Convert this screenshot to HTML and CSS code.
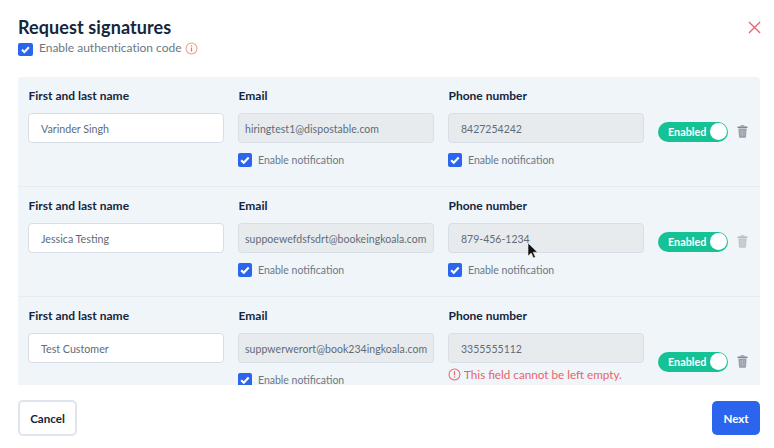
FILE: index.html
```html
<!DOCTYPE html>
<html lang="en">
<head>
<meta charset="utf-8">
<title>Request signatures</title>
<link rel="stylesheet" href="styles.css">
</head>
<body>
<div class="modal">
  <header class="head">
    <h1 class="title">Request signatures</h1>
    <svg class="close" viewBox="0 0 14 14" width="14" height="14"><path d="M1 1l12 12M13 1L1 13" fill="none" stroke="#e8636a" stroke-width="1.4"/></svg>
  </header>
  <div class="auth">
    <span class="check check-lg"><svg viewBox="0 0 16 16"><path d="M3.6 8.4l3 2.8 5.6-6" fill="none" stroke="#fff" stroke-width="2.6"/></svg></span>
    <span class="auth-text">Enable authentication code</span>
    <svg class="info" viewBox="0 0 14 14" width="13" height="13"><circle cx="7" cy="7" r="5.9" fill="none" stroke="#ee9a85" stroke-width="1.1"/><path d="M7 6v4.2M7 3.5v1.3" stroke="#e8745f" stroke-width="1.3" fill="none"/></svg>
  </div>

  <div class="panel">
    <section class="row">
      <div class="col">
        <div class="label">First and last name</div>
        <div class="input input-name">Varinder Singh</div>
      </div>
      <div class="col">
        <div class="label">Email</div>
        <div class="input input-off">hiringtest1@dispostable.com</div>
        <div class="notify"><span class="check"><svg viewBox="0 0 16 16"><path d="M3.6 8.4l3 2.8 5.6-6" fill="none" stroke="#fff" stroke-width="2.4"/></svg></span>Enable notification</div>
      </div>
      <div class="col">
        <div class="label">Phone number</div>
        <div class="input input-off">8427254242</div>
        <div class="notify"><span class="check"><svg viewBox="0 0 16 16"><path d="M3.6 8.4l3 2.8 5.6-6" fill="none" stroke="#fff" stroke-width="2.4"/></svg></span>Enable notification</div>
      </div>
      <div class="actions">
        <div class="toggle"><span class="toggle-text">Enabled</span><span class="knob"></span></div>
        <svg class="trash" viewBox="0 0 12 14"><path d="M4.2 1.6V.8h3.6v.8" fill="none" stroke="#7f8a96"/><rect x=".5" y="1.6" width="11" height="1.7" rx=".5" fill="#7f8a96"/><path d="M1.5 3.8h9l-.7 9.2a.8.8 0 0 1-.8.7H3a.8.8 0 0 1-.8-.7z" fill="#97a1ab"/><path d="M4.2 5.4v6.6M6 5.4v6.6M7.8 5.4v6.6" stroke="#c3cad1" stroke-width=".6"/></svg>
      </div>
    </section>

    <section class="row">
      <div class="col">
        <div class="label">First and last name</div>
        <div class="input input-name">Jessica Testing</div>
      </div>
      <div class="col">
        <div class="label">Email</div>
        <div class="input input-off">suppoewefdsfsdrt@bookeingkoala.com</div>
        <div class="notify"><span class="check"><svg viewBox="0 0 16 16"><path d="M3.6 8.4l3 2.8 5.6-6" fill="none" stroke="#fff" stroke-width="2.4"/></svg></span>Enable notification</div>
      </div>
      <div class="col">
        <div class="label">Phone number</div>
        <div class="input input-off cursor-host">879-456-1234
          <svg class="cursor" viewBox="0 0 12 18" width="12" height="18"><path d="M1 1v13l3.2-3 2.2 5 2-.9-2.2-4.900h4.300z" fill="#111" stroke="#eee" stroke-width=".6"/></svg>
        </div>
        <div class="notify"><span class="check"><svg viewBox="0 0 16 16"><path d="M3.6 8.4l3 2.8 5.6-6" fill="none" stroke="#fff" stroke-width="2.4"/></svg></span>Enable notification</div>
      </div>
      <div class="actions">
        <div class="toggle"><span class="toggle-text">Enabled</span><span class="knob"></span></div>
        <svg class="trash trash-off" viewBox="0 0 12 14"><path d="M4.2 1.6V.8h3.6v.8" fill="none" stroke="#7f8a96"/><rect x=".5" y="1.6" width="11" height="1.7" rx=".5" fill="#7f8a96"/><path d="M1.5 3.8h9l-.7 9.2a.8.8 0 0 1-.8.7H3a.8.8 0 0 1-.8-.7z" fill="#97a1ab"/><path d="M4.2 5.4v6.6M6 5.4v6.6M7.8 5.4v6.6" stroke="#c3cad1" stroke-width=".6"/></svg>
      </div>
    </section>

    <section class="row">
      <div class="col">
        <div class="label">First and last name</div>
        <div class="input input-name">Test Customer</div>
      </div>
      <div class="col">
        <div class="label">Email</div>
        <div class="input input-off">suppwerwerort@book234ingkoala.com</div>
        <div class="notify"><span class="check"><svg viewBox="0 0 16 16"><path d="M3.6 8.4l3 2.8 5.6-6" fill="none" stroke="#fff" stroke-width="2.4"/></svg></span>Enable notification</div>
      </div>
      <div class="col">
        <div class="label">Phone number</div>
        <div class="input input-off">3355555112</div>
        <div class="error"><svg viewBox="0 0 14 14" width="13" height="13"><circle cx="7" cy="7" r="5.9" fill="none" stroke="#e8636a" stroke-width="1.1"/><path d="M7 3.400v4.400M7 9.200v1.400" stroke="#e8636a" stroke-width="1.3" fill="none"/></svg>This field cannot be left empty.</div>
      </div>
      <div class="actions">
        <div class="toggle"><span class="toggle-text">Enabled</span><span class="knob"></span></div>
        <svg class="trash" viewBox="0 0 12 14"><path d="M4.2 1.6V.8h3.6v.8" fill="none" stroke="#7f8a96"/><rect x=".5" y="1.6" width="11" height="1.7" rx=".5" fill="#7f8a96"/><path d="M1.5 3.8h9l-.7 9.2a.8.8 0 0 1-.8.7H3a.8.8 0 0 1-.8-.7z" fill="#97a1ab"/><path d="M4.2 5.4v6.6M6 5.4v6.6M7.8 5.4v6.6" stroke="#c3cad1" stroke-width=".6"/></svg>
      </div>
    </section>
  </div>

  <footer class="foot">
    <button class="btn btn-cancel" type="button">Cancel</button>
    <button class="btn btn-next" type="button">Next</button>
  </footer>
</div>
</body>
</html>
```

FILE: styles.css
```css
* { box-sizing: border-box; }
html, body { margin: 0; padding: 0; }
body {
  width: 774px;
  height: 448px;
  overflow: hidden;
  background: #fff;
  font-family: Lato, "Liberation Sans", sans-serif;
  color: #14263d;
}
.modal { padding: 0 14px 0 18px; height: 448px; }
.head {
  display: flex;
  justify-content: space-between;
  align-items: center;
  height: 40px;
  padding-top: 14px;
}
.title { margin: 0; font-size: 18px; line-height: 26px; font-weight: 700; color: #14263d; letter-spacing: 0.1px; }
.close { margin-right: -1px; width: 13px; height: 13px; }
.auth {
  display: flex;
  align-items: center;
  height: 16px;
  gap: 6px;
  font-size: 12px;
  color: #6c7884;
}
.auth-text { line-height: 16px; letter-spacing: -0.02px; }
.info { margin-left: -3px; }
.check {
  width: 14px;
  height: 14px;
  flex: none;
  border-radius: 2px;
  background: #2c65ed;
  display: inline-flex;
}
.check-lg { width: 15px; height: 13px; margin-top: 2px; }
.check svg { width: 100%; height: 100%; display: block; }
.panel {
  margin-top: 21px;
  width: 742px;
  height: 308px;
  background: #f0f5f9;
  border-radius: 4px 4px 0 0;
  overflow: hidden;
}
.row {
  display: flex;
  align-items: center;
  padding-left: 10px;
  min-height: 110px;
  border-bottom: 1px solid #e6ebf0;
}
.row:last-child { border-bottom: 0; min-height: 129px; }
.col {
  width: 195.5px;
  margin-right: 14.5px;
  align-self: flex-start;
  padding-top: 11px;
}
.label { font-size: 12px; font-weight: 700; line-height: 16px; color: #14263d; padding-left: 0.5px; }
.input {
  margin-top: 9px;
  height: 30px;
  border: 1px solid #d7dee5;
  border-radius: 4px;
  font-size: 10.5px;
  line-height: 30px;
  white-space: nowrap;
  color: #5f6b77;
}
.input-name { background: #fff; padding-left: 12px; font-size: 10.7px; }
.input-off { background: #e8ebee; padding-left: 6px; letter-spacing: 0.05px; }
.col:nth-child(3) .input-off { padding-left: 12px; letter-spacing: 0; }
.cursor-host { position: relative; }
.cursor { position: absolute; left: 78px; top: 18px; }
.notify {
  display: flex;
  align-items: center;
  gap: 6px;
  margin-top: 10px;
  height: 14px;
  font-size: 10.5px;
  color: #6c7884;
}
.error {
  display: flex;
  align-items: center;
  gap: 3px;
  margin-top: 3px;
  font-size: 11.7px;
  line-height: 16px;
  color: #e8636a;
}
.actions { display: flex; align-items: center; gap: 9px; }
.toggle {
  width: 70px;
  height: 20px;
  border-radius: 10px;
  background: #14c295;
  display: flex;
  align-items: center;
  justify-content: space-between;
  padding: 0 1px 0 10px;
}
.toggle-text { font-size: 10.8px; font-weight: 700; color: #fff; }
.knob { width: 17px; height: 17px; border-radius: 50%; background: #fff; }
.trash { width: 11px; height: 13px; }
.trash-off { opacity: 0.55; }
.foot {
  display: flex;
  justify-content: space-between;
  align-items: center;
  width: 742px;
  margin-top: 15px;
}
.btn {
  height: 34px;
  font-family: inherit;
  font-size: 11.6px;
  font-weight: 700;
  border-radius: 5px;
}
.btn-cancel { width: 59px; height: 36px; background: #fff; border: 2px solid #dfe5ec; color: #14263d; }
.btn-next { width: 48px; background: #2c65ed; border: 0; color: #fff; }
```
